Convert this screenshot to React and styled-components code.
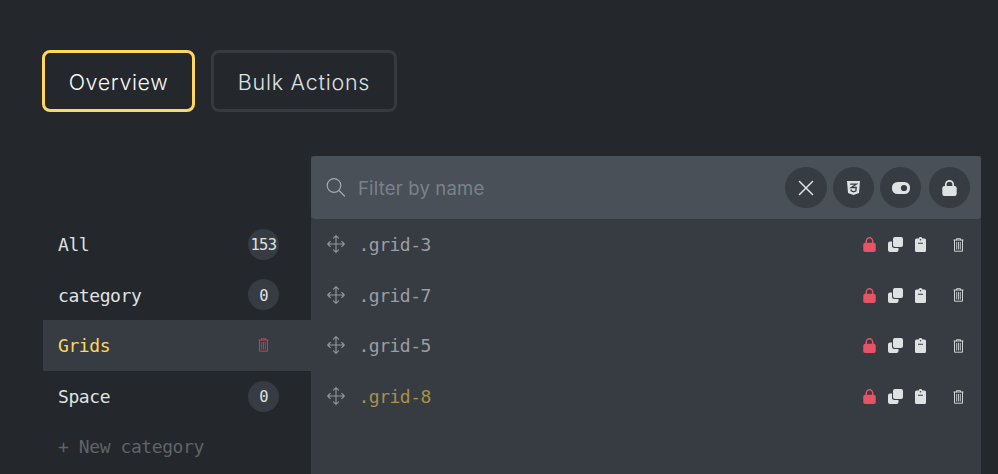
import React from "react";
import styled, { createGlobalStyle } from "styled-components";

const Global = createGlobalStyle`
  * { box-sizing: border-box; }
  body { margin: 0; background: #24272c; overflow: hidden; }
`;

const Page = styled.main`
  height: 474px;
  padding: 50px 17px 0 42px;
  background: #24272c;
  color: #dee2e3;
  font-family: Inter, sans-serif;
  overflow: hidden;
`;

const Tabs = styled.nav`
  display: flex;
  gap: 16px;
  height: 62px;
`;

const Tab = styled.button`
  width: ${(p) => p.$width}px;
  height: 62px;
  padding: 3px 0 0;
  border: 3px solid ${(p) => (p.$active ? "#ffd75e" : "#373a40")};
  border-radius: 8px;
  background: transparent;
  color: ${(p) => (p.$active ? "#f8f9fa" : "#dee2e3")};
  font: 350 21.5px/1 Inter, sans-serif;
  letter-spacing: ${(p) => p.$tracking}px;
  white-space: nowrap;
`;

const Workspace = styled.div`
  display: grid;
  grid-template-columns: 268px 670px;
  margin: 44px 0 0 1px;
  height: 318px;
`;

const Sidebar = styled.aside`
  padding-top: 63px;
`;

const Category = styled.div`
  display: flex;
  align-items: center;
  justify-content: space-between;
  height: 50.6px;
  padding: 0 32px 0 15px;
  background: ${(p) => (p.$active ? "#373b42" : "transparent")};
  color: ${(p) => (p.$active ? "#ffd75e" : p.$muted ? "#606467" : "#dee2e3")};
`;

const Mono = styled.span`
  font: 400 18px/24px "DejaVu Sans Mono", monospace;
  letter-spacing: -0.42px;
  padding-top: 1.4px;
  white-space: pre;
`;

const Count = styled.span`
  display: flex;
  align-items: center;
  justify-content: center;
  width: 31px;
  height: 31px;
  padding-top: 3px;
  border-radius: 50%;
  background: #373b42;
  color: #dee2e3;
  font: 400 15.5px/1 "DejaVu Sans Mono", monospace;
  letter-spacing: -0.6px;
`;

const DeleteSlot = styled.span`
  display: flex;
  justify-content: center;
  width: 31px;
  color: #cf4458;
`;

const Panel = styled.section`
  background: #373b42;
`;

const FilterBar = styled.header`
  display: flex;
  align-items: center;
  height: 63px;
  padding: 0 11px 0 15px;
  border-radius: 4px;
  background: #495058;
  color: #a3a9ae;
`;

const Placeholder = styled.span`
  flex: 1;
  margin-left: 12px;
  padding-top: 1px;
  color: #7b828a;
  font-size: 18.5px;
  letter-spacing: 0.18px;
`;

const Round = styled.button`
  display: grid;
  place-items: center;
  width: ${(p) => p.$size || 41}px;
  height: 41px;
  margin: 0 0 0 ${(p) => p.$gap || 0}px;
  padding: 0;
  border: 0;
  border-radius: 50%;
  background: #373b42;
  color: #dee2e3;
`;

const ClassRow = styled.div`
  display: flex;
  align-items: center;
  height: 50.6px;
  padding: 0 17px 0 16px;
  color: ${(p) => (p.$highlight ? "#a79248" : "#9b9ea1")};
`;

const ClassName = styled(Mono)`
  flex: 1;
  margin-left: 13.5px;
  letter-spacing: -0.5px;
`;

const Handle = styled.span`
  display: flex;
  color: #92979b;
`;

const Actions = styled.div`
  display: grid;
  grid-template-columns: 26px 26px 24px 32px;
  justify-items: center;
  align-items: center;
  padding-top: 1px;
  color: #dee2e3;

  > :last-child {
    justify-self: end;
  }
`;

const Danger = styled.span`
  display: flex;
  color: #e75265;
`;

const Icon = styled.svg`
  display: block;
  width: ${(p) => p.$w}px;
  height: ${(p) => p.$h || p.$w}px;
  fill: none;
  stroke: currentColor;
  stroke-linecap: round;
  stroke-linejoin: round;
`;

const Lock = ({ w = 15, h = 16 }) => (
  <Icon $w={w} $h={h} viewBox="0 0 15 16" preserveAspectRatio="none">
    <path d="M3.8 7V4.5a3.7 3.7 0 0 1 7.4 0V7" strokeWidth="1.7" />
    <rect x=".3" y="6" width="14.4" height="10" rx="2.2" fill="currentColor" stroke="none" />
  </Icon>
);

const Trash = () => (
  <Icon $w={11} $h={14} viewBox="0 0 11 14" strokeWidth=".9">
    <path d="M.9 2h9.2M3.5 1.8V.7h4v1.1M1.5 2.3v10.9h8V2.3" />
    <path d="M3.7 4.3v6.8M5.5 4.3v6.8M7.3 4.3v6.8" strokeWidth=".8" />
  </Icon>
);

const Copy = () => (
  <Icon $w={15} viewBox="0 0 15 15">
    <path fill="currentColor" stroke="none" d="M7 0h6a2 2 0 0 1 2 2v6a2 2 0 0 1-2 2H7a2 2 0 0 1-2-2V2a2 2 0 0 1 2-2Z" />
    <path fill="currentColor" stroke="none" d="M4 4.5H2a2 2 0 0 0-2 2V13a2 2 0 0 0 2 2h6.5a2 2 0 0 0 2-2v-2H6.5A2.5 2.5 0 0 1 4 8.5Z" />
  </Icon>
);

const Clipboard = () => (
  <Icon $w={11} $h={15} viewBox="0 0 11 15">
    <path
      fill="currentColor"
      stroke="none"
      fillRule="evenodd"
      d="M1.5 1.5H3.6a2 2 0 0 1 3.8 0h2.1A1.5 1.5 0 0 1 11 3v10.5a1.5 1.5 0 0 1-1.5 1.5h-8A1.5 1.5 0 0 1 0 13.5V3A1.5 1.5 0 0 1 1.5 1.5ZM5.5 1.9a.8.8 0 1 0 0 1.6.8.8 0 0 0 0-1.6ZM3 5.8v1h5v-1Z"
    />
  </Icon>
);

const Move = () => (
  <Icon $w={18} viewBox="0 0 18 18" strokeWidth="1.1">
    <path d="M9 .7v16.6M.7 9h16.6M6.5 3.2 9 .7l2.5 2.5M6.5 14.8 9 17.3l2.5-2.5M3.2 6.5.7 9l2.5 2.5M14.8 6.5 17.3 9l-2.5 2.5" />
  </Icon>
);

const Search = () => (
  <Icon $w={20} viewBox="0 0 20 20" strokeWidth="1.2">
    <circle cx="8" cy="7.5" r="6.8" />
    <path d="m13 12.5 5.5 5.5" />
  </Icon>
);

const Close = () => (
  <Icon $w={16} viewBox="0 0 16 16" strokeWidth="1.5">
    <path d="m1.5 1.5 13 13m0-13-13 13" />
  </Icon>
);

const Css = () => (
  <Icon $w={13} $h={14} viewBox="0 0 13 14">
    <path d="M0 0h13l-1 12-5.5 2L1 12Z" fill="currentColor" stroke="none" />
    <path d="M3.7 3.2h5.6L4.2 6.5h5l-.3 3.4-2.4.9-2.3-.9-.1-1" stroke="#373b42" strokeWidth="1.3" strokeLinejoin="miter" />
  </Icon>
);

const Toggle = () => (
  <Icon $w={18} $h={12} viewBox="0 0 18 12">
    <rect width="18" height="12" rx="5.5" fill="currentColor" stroke="none" />
    <circle cx="12" cy="6" r="3.1" fill="#373b42" stroke="none" />
  </Icon>
);

const categories = [
  { name: "All", count: 153 },
  { name: "category", count: 0 },
  { name: "Grids", active: true },
  { name: "Space", count: 0 },
];

const classes = [".grid-3", ".grid-7", ".grid-5", ".grid-8"];

export default function App() {
  return (
    <Page>
      <Global />
      <Tabs>
        <Tab $active $width={153} $tracking={0.6}>Overview</Tab>
        <Tab $width={186} $tracking={0.75}>Bulk Actions</Tab>
      </Tabs>
      <Workspace>
        <Sidebar>
          {categories.map((c) => (
            <Category key={c.name} $active={c.active}>
              <Mono>{c.name}</Mono>
              {c.active ? <DeleteSlot><Trash /></DeleteSlot> : <Count>{c.count}</Count>}
            </Category>
          ))}
          <Category $muted><Mono>+ New category</Mono></Category>
        </Sidebar>
        <Panel>
          <FilterBar>
            <Search />
            <Placeholder>Filter by name</Placeholder>
            <Round $size={42}><Close /></Round>
            <Round $gap={6}><Css /></Round>
            <Round $gap={6}><Toggle /></Round>
            <Round $gap={8}><Lock /></Round>
          </FilterBar>
          {classes.map((name) => (
            <ClassRow key={name} $highlight={name === ".grid-8"}>
              <Handle><Move /></Handle>
              <ClassName>{name}</ClassName>
              <Actions>
                <Danger><Lock w={13} h={15} /></Danger>
                <Copy />
                <Clipboard />
                <Trash />
              </Actions>
            </ClassRow>
          ))}
        </Panel>
      </Workspace>
    </Page>
  );
}
